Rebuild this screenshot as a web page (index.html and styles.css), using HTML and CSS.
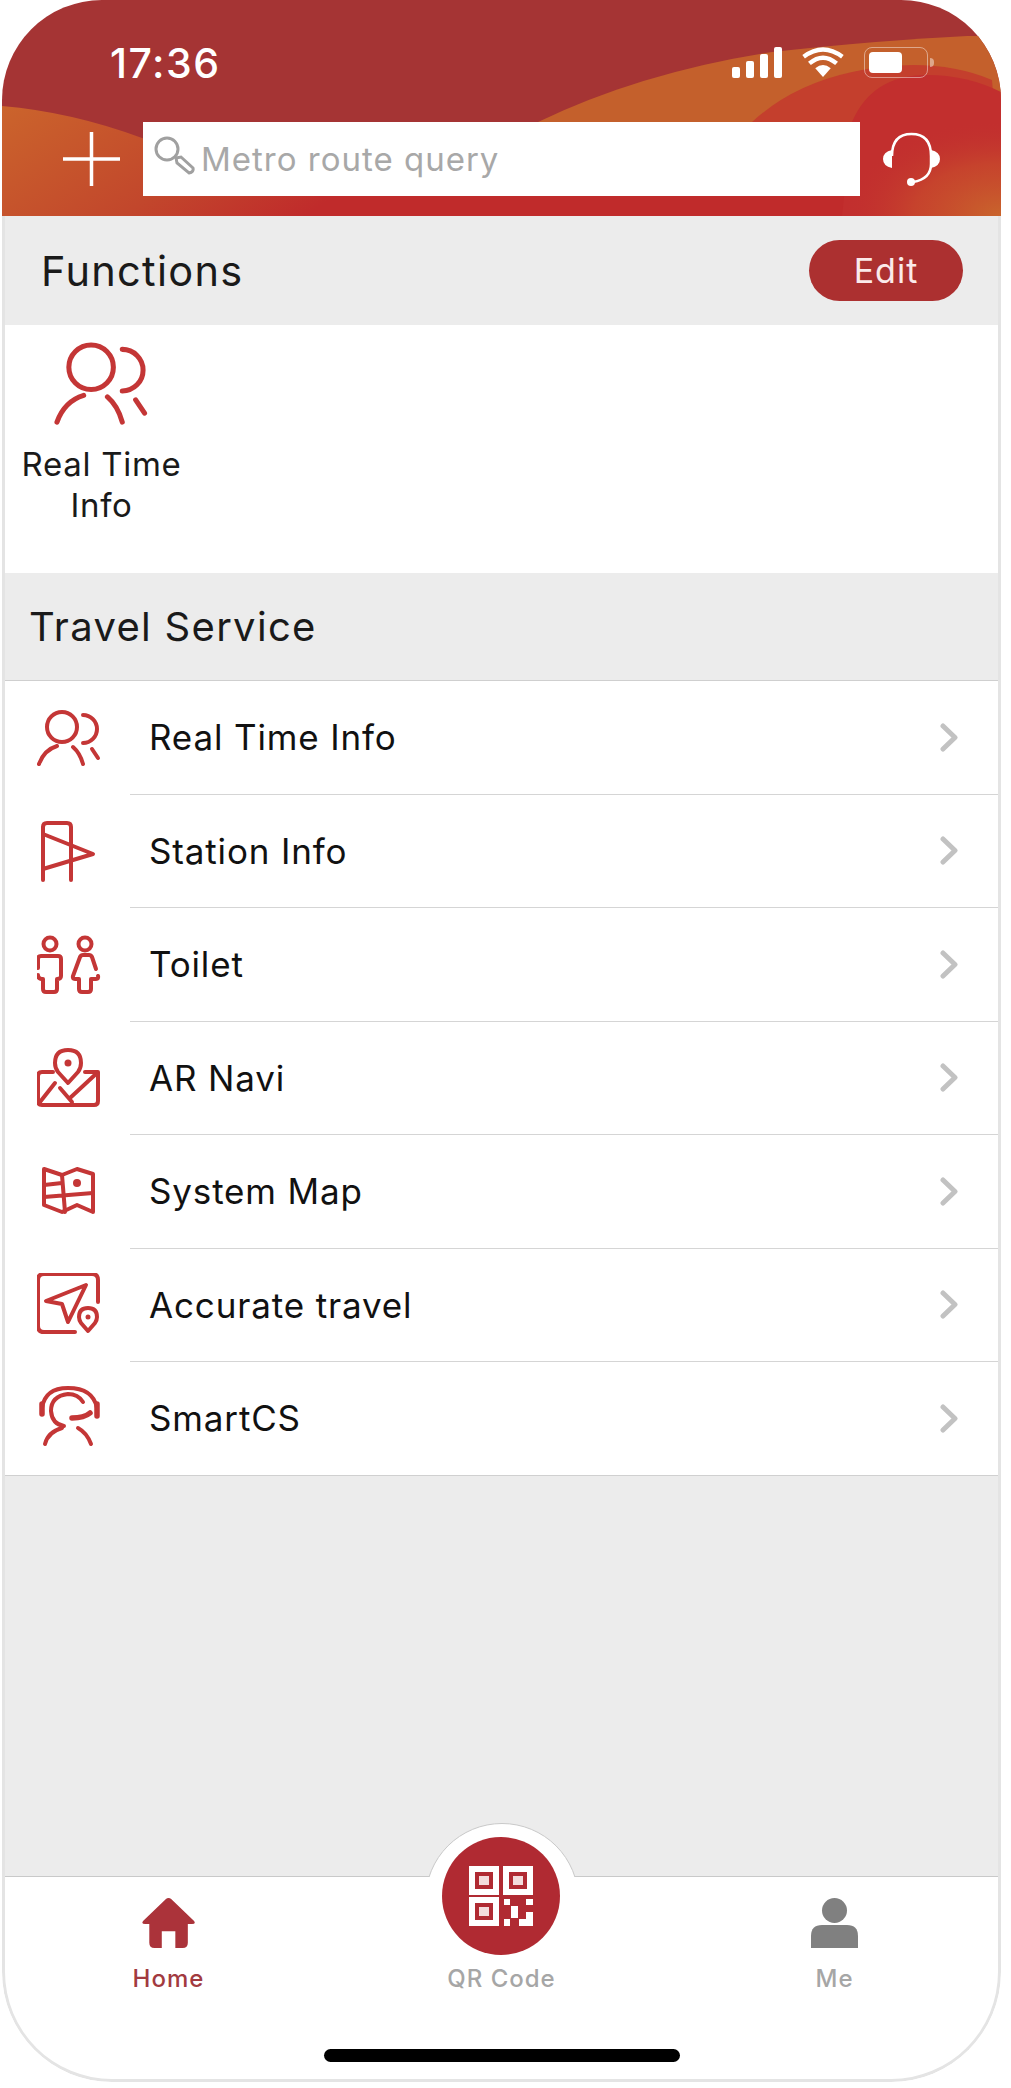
FILE: index.html
```html
<!DOCTYPE html>
<html lang="en">
<head>
  <meta charset="UTF-8">
  <title>Metro Services</title>
  <link rel="stylesheet" href="styles.css">
</head>
<body>
  <div class="phone">
    <header class="header">
      <svg class="waves" viewBox="0 0 999 216" preserveAspectRatio="none">
        <defs>
          <linearGradient id="leftWave" x1="0" y1="0" x2="1" y2="0.4">
            <stop offset="0" stop-color="#cb642c"/>
            <stop offset="0.6" stop-color="#c2472c"/>
            <stop offset="1" stop-color="#c02b2b"/>
          </linearGradient>
          <radialGradient id="cornerGlow" cx="1" cy="1" r="1">
            <stop offset="0" stop-color="#c9652c"/>
            <stop offset="0.55" stop-color="#c9502c" stop-opacity="0.6"/>
            <stop offset="1" stop-color="#c22f2e" stop-opacity="0"/>
          </radialGradient>
        </defs>
        <rect width="999" height="216" fill="#a53434"/>
        <rect x="300" y="190" width="600" height="26" fill="#c02b2b"/>
        <path d="M0 106 Q70 112 140 138 L330 202 L400 216 H0 Z" fill="url(#leftWave)"/>
        <path d="M530 150 L536 122 Q640 72 770 52 Q880 40 965 36 L999 36 V190 H530 Z" fill="#c4602c"/>
        <path d="M750 122 Q790 85 850 72 Q930 55 990 80 L999 190 H750 Z" fill="#c43f2d"/>
        <path d="M850 122 Q870 75 925 75 Q965 75 999 92 V216 H840 Z" fill="#c22f2e"/>
        <rect x="840" y="120" width="159" height="96" fill="url(#cornerGlow)"/>
      </svg>

      <div class="status-bar">
        <span class="time">17:36</span>
        <div class="status-icons">
          <svg class="ic-signal" viewBox="0 0 50 31">
            <rect x="0" y="20" width="8" height="11" rx="2"/>
            <rect x="14" y="14" width="8" height="17" rx="2"/>
            <rect x="28" y="7" width="8" height="24" rx="2"/>
            <rect x="42" y="0" width="8" height="31" rx="2"/>
          </svg>
          <svg class="ic-wifi" viewBox="0 0 44 32">
            <path d="M22 31 L14 22 Q22 15 30 22 Z" fill="#fff"/>
            <path d="M8 17 Q22 5 36 17" fill="none" stroke="#fff" stroke-width="4.5"/>
            <path d="M2 10 Q22 -5 42 10" fill="none" stroke="#fff" stroke-width="4.5"/>
          </svg>
          <div class="battery"><span class="battery-level"></span></div>
        </div>
      </div>

      <div class="search-row">
        <svg class="ic-plus" viewBox="0 0 57 54">
          <path d="M0 27 H57 M28.5 0 V54" stroke="#fff" stroke-width="3.5" fill="none"/>
        </svg>
        <div class="search-box">
          <svg class="ic-search" viewBox="0 0 42 40">
            <circle cx="14" cy="13" r="11" fill="none" stroke="#a0a0a0" stroke-width="3"/>
            <path d="M23 22 L28 21 L40 32 Q41 36 36 37 L24 27 Z" fill="none" stroke="#a0a0a0" stroke-width="3"/>
          </svg>
          <span>Metro route query</span>
        </div>
        <svg class="ic-headset" viewBox="0 0 57 54">
          <path d="M9 24 Q9 2 28.5 2 Q48 2 48 24 V32 Q48 47 30 50" fill="none" stroke="#fff" stroke-width="2.5"/>
          <path d="M9 18 V36 Q0 34 0 27 Q0 20 9 18 Z M48 18 V36 Q57 34 57 27 Q57 20 48 18 Z" fill="#fff"/>
          <circle cx="28" cy="50" r="4" fill="#fff"/>
        </svg>
      </div>
    </header>

    <section class="band band-functions">
      <h2>Functions</h2>
      <button class="edit-btn">Edit</button>
    </section>

    <section class="functions">
      <div class="func-item">
        <svg class="ic ic-large" viewBox="0 0 64 64"><use href="#i-people"/></svg>
        <span>Real Time Info</span>
      </div>
    </section>

    <section class="band band-travel">
      <h2>Travel Service</h2>
    </section>

    <ul class="service-list">
      <li class="row">
        <div class="row-icon"><svg class="ic" viewBox="0 0 64 64"><use href="#i-people"/></svg></div>
        <div class="row-body"><span>Real Time Info</span><svg class="chevron" viewBox="0 0 18 29"><path d="M3 3 L15 14.5 L3 26"/></svg></div>
      </li>
      <li class="row">
        <div class="row-icon"><svg class="ic" viewBox="0 0 64 64"><use href="#i-flag"/></svg></div>
        <div class="row-body"><span>Station Info</span><svg class="chevron" viewBox="0 0 18 29"><path d="M3 3 L15 14.5 L3 26"/></svg></div>
      </li>
      <li class="row">
        <div class="row-icon"><svg class="ic" viewBox="0 0 64 64"><use href="#i-toilet"/></svg></div>
        <div class="row-body"><span>Toilet</span><svg class="chevron" viewBox="0 0 18 29"><path d="M3 3 L15 14.5 L3 26"/></svg></div>
      </li>
      <li class="row">
        <div class="row-icon"><svg class="ic" viewBox="0 0 64 64"><use href="#i-ar"/></svg></div>
        <div class="row-body"><span>AR Navi</span><svg class="chevron" viewBox="0 0 18 29"><path d="M3 3 L15 14.5 L3 26"/></svg></div>
      </li>
      <li class="row">
        <div class="row-icon"><svg class="ic" viewBox="0 0 64 64"><use href="#i-map"/></svg></div>
        <div class="row-body"><span>System Map</span><svg class="chevron" viewBox="0 0 18 29"><path d="M3 3 L15 14.5 L3 26"/></svg></div>
      </li>
      <li class="row">
        <div class="row-icon"><svg class="ic" viewBox="0 0 64 64"><use href="#i-travel"/></svg></div>
        <div class="row-body"><span>Accurate travel</span><svg class="chevron" viewBox="0 0 18 29"><path d="M3 3 L15 14.5 L3 26"/></svg></div>
      </li>
      <li class="row">
        <div class="row-icon"><svg class="ic" viewBox="0 0 64 64"><use href="#i-agent"/></svg></div>
        <div class="row-body"><span>SmartCS</span><svg class="chevron" viewBox="0 0 18 29"><path d="M3 3 L15 14.5 L3 26"/></svg></div>
      </li>
    </ul>

    <div class="filler"></div>

    <nav class="tabbar">
      <div class="qr-bump"></div>
      <div class="qr-btn">
        <svg viewBox="0 0 64 60">
          <path d="M3 3 H27 V26 H3 Z M37 3 H61 V26 H37 Z M3 34 H27 V57 H3 Z" fill="none" stroke="#fff" stroke-width="6"/>
          <path d="M10 10 H20 V19 H10 Z M44 10 H54 V19 H44 Z M10 41 H20 V50 H10 Z" fill="#f3dcdc"/>
          <path d="M35 33 H41 V39 H35 Z M57 33 H64 V39 H57 Z M42 40 H49 V52 H42 Z M35 53 H41 V60 H35 Z M50 53 H57 V46 H64 V60 H50 Z" fill="#fff"/>
        </svg>
      </div>
      <div class="tabs">
        <div class="tab tab-active">
          <svg class="tab-icon" viewBox="0 0 51 48">
            <path d="M25.5 0 Q27 0 28 1 L50 22 Q52 25 48 25 H44 V43 Q44 48 39 48 H32 V32 H19 V48 H12 Q7 48 7 43 V25 H3 Q-1 25 1 22 L23 1 Q24 0 25.5 0 Z" fill="#ab333a"/>
          </svg>
          <span>Home</span>
        </div>
        <div class="tab">
          <div class="tab-icon"></div>
          <span>QR Code</span>
        </div>
        <div class="tab">
          <svg class="tab-icon" viewBox="0 0 47 50">
            <circle cx="23.5" cy="12.5" r="12.5" fill="#808080"/>
            <path d="M0 50 V38 Q0 27 11 27 H36 Q47 27 47 38 V50 Z" fill="#808080"/>
          </svg>
          <span>Me</span>
        </div>
      </div>
      <div class="home-indicator"></div>
    </nav>
  </div>

  <svg class="sprites" width="0" height="0">
    <defs>
      <g id="i-people">
        <circle cx="25" cy="21" r="15"/>
        <path d="M2 58 Q7 44 20 40 M36 41 Q43 47 46 58"/>
        <path d="M46 9 A14 14 0 0 1 46 37 M55 43 L61 52"/>
      </g>
      <g id="i-flag">
        <path d="M6 61 V8 Q6 4 10 4 H30 Q34 4 34 8 V61"/>
        <path d="M6 15 L56 35 L6 50"/>
      </g>
      <g id="i-toilet">
        <circle cx="13" cy="11" r="6.5"/>
        <circle cx="48" cy="11" r="6.5"/>
        <path d="M1 35 V26 Q1 23 4 23 H21 Q24 23 24 26 V43 Q24 46 20 46 V56 Q20 59 17 59 H9 Q6 59 6 56 V46 Q1 46 1 42"/>
        <path d="M59 36 L55 24 Q54 22 52 22 H46 Q44 22 43 24 L36 43 Q35 46 38 46 H42 V56 Q42 59 45 59 H51 Q54 59 54 56 V46 H59 Q62 46 61 43"/>
      </g>
      <g id="i-ar">
        <path d="M31 37 L21 26 Q18 22 18 17 Q18 4 31 4 Q44 4 44 17 Q44 22 41 26 Z"/>
        <circle class="dot" cx="31" cy="17" r="3.5"/>
        <path d="M16 26 H5 Q1 26 1 30 V55 Q1 59 5 59 H57 Q61 59 61 55 V26 H48"/>
        <path d="M3 56 L18 37 M23 42 L35 56 M33 52 L60 27"/>
      </g>
      <g id="i-map">
        <path d="M7 9 L25 15 L40 9 L56 14 V52 L40 45 L25 52 L7 45 Z"/>
        <path d="M25 15 L28 52 M7 25 L25 23 M7 37 L56 33"/>
        <circle class="dot" cx="40" cy="23" r="4"/>
      </g>
      <g id="i-travel">
        <path d="M38 59 H7 Q1 59 1 53 V7 Q1 1 7 1 H55 Q61 1 61 7 V29"/>
        <path d="M49 12 L9 28 L25 31 L31 49 Z"/>
        <path d="M51 58 L44 50 Q42 47 42 44 Q42 35 51 35 Q60 35 60 44 Q60 47 58 50 Z"/>
        <circle class="dot" cx="51" cy="44" r="2.5"/>
      </g>
      <g id="i-agent">
        <path d="M5 22 Q8 2 31 2 Q56 2 60 22"/>
        <path class="thick" d="M5 18 V28 M60 18 V30"/>
        <path d="M46 16 Q41 8 31 8 Q14 10 14 25 Q15 38 27 40"/>
        <path class="thick" d="M35 32 Q47 32 53 27"/>
        <path d="M8 58 Q11 46 25 42 M41 42 Q50 47 54 58"/>
      </g>
    </defs>
  </svg>
</body>
</html>
```

FILE: styles.css
```css
* { box-sizing: border-box; }
body { margin: 0; background: #fff; font-family: Inter, "Noto Sans", sans-serif; color: #1a1a1a; }

.phone { position: relative; width: 999px; height: 2082px; margin-left: 2px; display: flex; flex-direction: column; background: #fff; overflow: hidden; border-radius: 100px 100px 110px 110px; }
.phone::after { content: ""; position: absolute; left: 0; right: 0; top: 216px; bottom: 0; border: 3px solid #e4e4e4; border-top: none; border-radius: 0 0 110px 110px; pointer-events: none; }

/* header */
.header { position: relative; height: 216px; flex: none; }
.waves { position: absolute; left: 0; top: 0; width: 100%; height: 100%; }
.status-bar, .search-row { position: relative; }
.status-bar { height: 122px; display: flex; justify-content: space-between; padding: 47px 73px 0 108px; }
.time { color: #fff; font-size: 41px; font-weight: 500; letter-spacing: 1.5px; line-height: 33px; }
.status-icons { display: flex; gap: 19px; height: 31px; }
.ic-signal { width: 50px; height: 31px; fill: #fff; }
.ic-wifi { width: 44px; height: 31px; }
.battery { position: relative; width: 64px; height: 31px; border: 1.5px solid rgba(255,255,255,.45); border-radius: 8px; padding: 4px; }
.battery::after { content: ""; position: absolute; right: -7px; top: 10px; width: 4px; height: 9px; background: rgba(255,255,255,.45); border-radius: 0 4px 4px 0; }
.battery-level { display: block; width: 33px; height: 100%; background: #fff; border-radius: 4px; }
.search-row { display: flex; align-items: center; height: 74px; padding-left: 61px; }
.ic-plus { width: 57px; height: 54px; }
.search-box { width: 717px; height: 74px; margin-left: 23px; background: #fff; display: flex; align-items: center; padding-left: 10px; font-size: 33px; letter-spacing: 1px; color: #a8a8a8; }
.ic-search { width: 42px; height: 40px; margin: -6px 6px 0 0; }
.ic-headset { width: 57px; height: 54px; margin-left: 23px; }

/* section titles */
.band { flex: none; background: #ececec; display: flex; align-items: center; justify-content: space-between; }
.band h2 { margin: 0; font-size: 40px; font-weight: 400; letter-spacing: 1.3px; }
.band-functions { height: 109px; padding: 0 38px 0 39px; }
.band-functions h2 { font-size: 41.5px; }
.band-travel { height: 108px; padding-left: 27px; border-bottom: 1px solid #cfcfcf; }
.edit-btn { width: 154px; height: 61px; padding: 0; border: none; border-radius: 31px; background: #ac3030; color: #fbeaea; font: 400 34px Inter, sans-serif; letter-spacing: 1px; }

.functions { flex: none; height: 248px; padding: 11px 0 0 1px; }
.func-item { width: 197px; display: flex; flex-direction: column; align-items: center; text-align: center; font-size: 33px; letter-spacing: .7px; line-height: 41px; }
.func-item span { display: block; width: 180px; margin-top: 13px; }

.ic { width: 64px; height: 64px; fill: none; stroke: #c43636; stroke-width: 4; stroke-linecap: round; stroke-linejoin: round; display: block; }
.ic-large { width: 95px; height: 95px; stroke-width: 3.4; }
.sprites { position: absolute; }
.sprites .dot { fill: #c43636; stroke: none; }
.sprites .thick { stroke-width: 5.5; }

/* list */
.service-list { list-style: none; margin: 0; padding: 0; flex: none; background: #fff; }
.row { display: flex; height: 113.5px; align-items: center; }
.row:last-child .row-body { border-bottom: none; }
.row:last-child { border-bottom: 1px solid #d0d0d0; }
.row-icon { width: 128px; padding-left: 35px; flex: none; }
.row-body { flex: 1; height: 100%; display: flex; align-items: center; justify-content: space-between; padding: 0 43px 0 19px; border-bottom: 1px solid #d5d5d5; font-size: 35px; letter-spacing: .85px; color: #111; }
.chevron { width: 18px; height: 29px; fill: none; stroke: #c2c2c2; stroke-width: 5; stroke-linecap: round; stroke-linejoin: round; }

.filler { flex: 1; background: #ececec; }

/* bottom tabs */
.tabbar { position: relative; flex: none; height: 206px; background: #fff; border-top: 1px solid #c9c9c9; }
.qr-bump { position: absolute; left: 422px; top: -54px; width: 154px; height: 54px; overflow: hidden; }
.qr-bump::before { content: ""; position: absolute; left: 1px; top: 0; width: 152px; height: 152px; border-radius: 50%; background: #fff; border: 1px solid #c9c9c9; }
.qr-btn { position: absolute; left: 440px; top: -40px; width: 118px; height: 118px; border-radius: 50%; background: #b02a32; display: flex; align-items: center; justify-content: center; }
.qr-btn svg { width: 64px; height: 60px; }
.tabs { display: grid; grid-template-columns: repeat(3, 1fr); padding-top: 21px; }
.tab { display: flex; flex-direction: column; align-items: center; font-size: 24px; font-weight: 500; letter-spacing: 1px; color: #a6a6a6; }
.tab-active { color: #a23a40; }
.tab-icon { height: 50px; width: auto; margin-bottom: 16px; }
.home-indicator { position: absolute; left: 322px; top: 172px; width: 356px; height: 13px; background: #000; border-radius: 7px; }
```
